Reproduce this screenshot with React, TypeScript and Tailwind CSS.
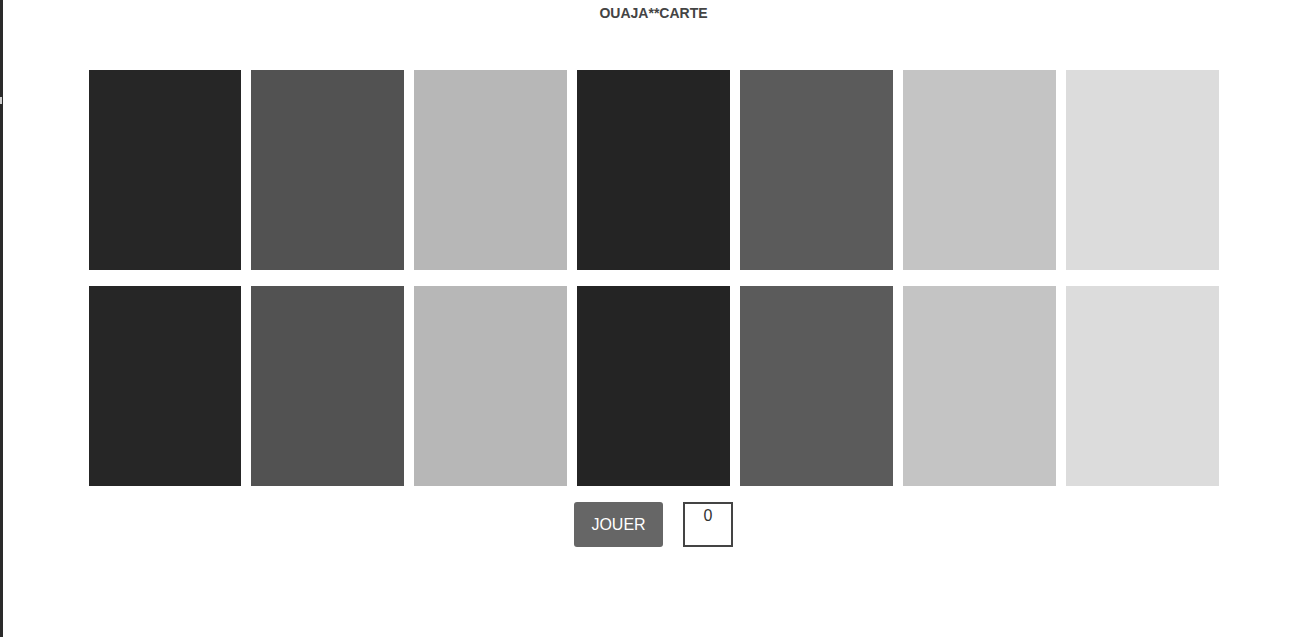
const colors = [
  'bg-[#262626]',
  'bg-[#525252]',
  'bg-[#b7b7b7]',
  'bg-[#242424]',
  'bg-[#5b5b5b]',
  'bg-[#c4c4c4]',
  'bg-[#dcdcdc]',
];

export default function App() {
  const rows = [0, 1];
  return (
    <div
      className="relative min-h-[637px] border-l-[3px] border-[#2a2a2a] bg-white"
      style={{ fontFamily: '"Liberation Sans", Arial, sans-serif' }}
    >
      {/* petit repère sur le bord gauche */}
      <div className="absolute left-[-3px] top-[97px] h-[7px] w-[2px] bg-[#d0d0d0]" />

      <h1 className="pt-[5px] text-center text-[14px] font-bold leading-[16px] text-[#444]">
        OUAJA**CARTE
      </h1>

      <div className="mx-auto mt-[49px] flex w-[1130px] flex-col gap-[16px]">
        {rows.map((r) => (
          <div key={r} className="grid grid-cols-7 gap-[10px]">
            {colors.map((c, i) => (
              <div key={i} className={`h-[200px] ${c}`} />
            ))}
          </div>
        ))}
      </div>

      <div className="mt-[16px] flex justify-center gap-[20px]">
        <button className="h-[45px] w-[89px] rounded-[3px] bg-[#666] text-[16px] text-white">
          JOUER
        </button>
        <div className="h-[45px] w-[50px] border-2 border-[#444] pt-[3px] text-center text-[16px] leading-[18px] text-[#333]">
          0
        </div>
      </div>
    </div>
  );
}
